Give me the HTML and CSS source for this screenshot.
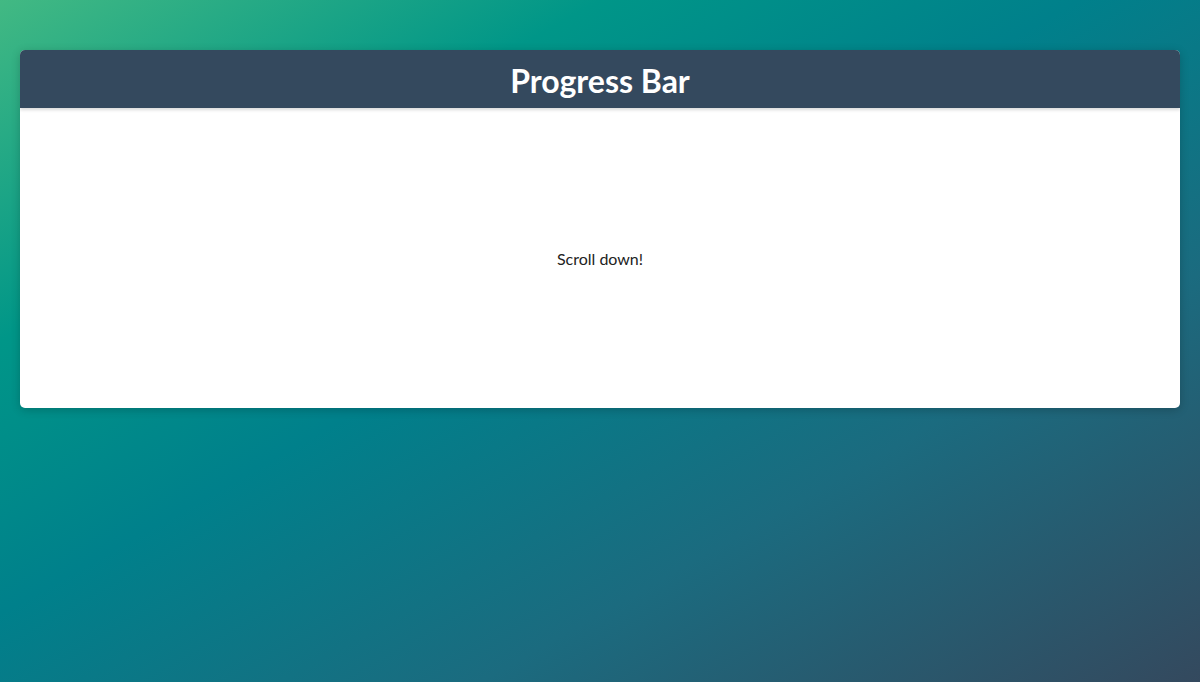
FILE: index.html
```html
<!DOCTYPE html>
<html lang="en">
<head>
<meta charset="utf-8">
<title>Progress Bar</title>
<link rel="stylesheet" href="styles.css">
</head>
<body>
<div class="card">
  <header class="card-header"><h1 class="title">Progress Bar</h1></header>
  <main class="card-body"><p class="hint">Scroll down!</p></main>
</div>
</body>
</html>
```
FILE: styles.css
```css
html, body {
  margin: 0;
  height: 100%;
}
body {
  box-sizing: border-box;
  padding: 50px 20px;
  background: linear-gradient(to bottom right, #42b983 0%, #009688 25%, #00808b 45%, #1b6b7f 70%, #34495e 100%);
  font-family: Lato, "Open Sans", sans-serif;
}
.card {
  border-radius: 5px;
  overflow: hidden;
  box-shadow: 0 2px 10px rgba(0,0,0,0.2);
  background: #fff;
}
.card-header {
  background: #34495e;
  height: 58px;
  display: flex;
  align-items: center;
  justify-content: center;
  box-shadow: 0 2px 3px rgba(0,0,0,0.15);
  position: relative;
}
.title {
  margin: 0;
  padding-top: 3px;
  color: #fff;
  font-size: 32px;
  font-weight: 700;
  line-height: 1;
}
.card-body {
  height: 300px;
  display: flex;
  align-items: center;
  justify-content: center;
}
.hint {
  margin: 0;
  font-size: 16px;
  color: #222;
}
```
